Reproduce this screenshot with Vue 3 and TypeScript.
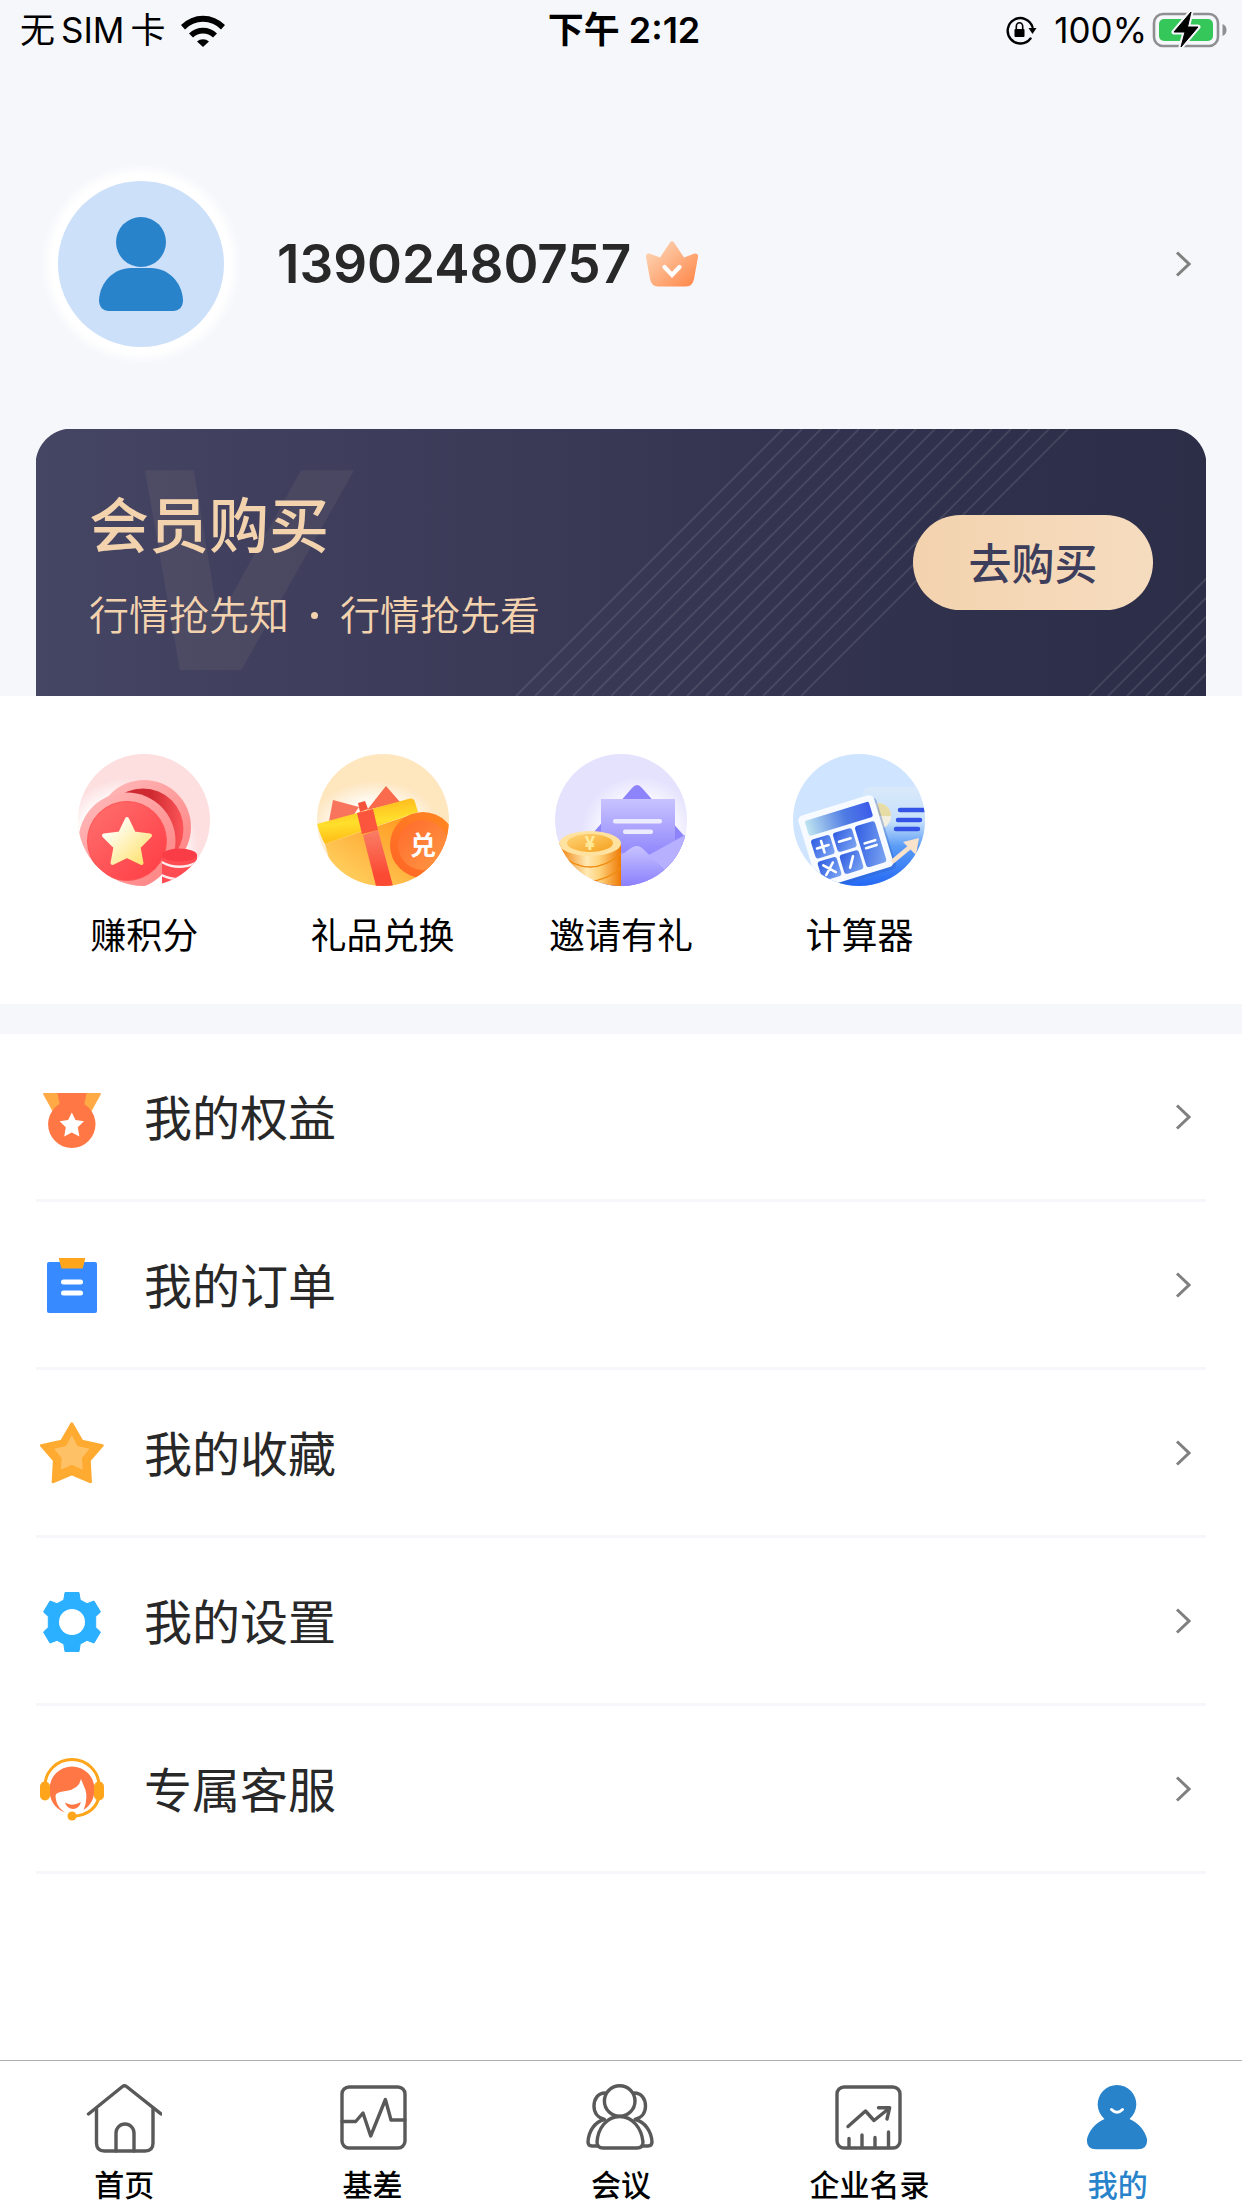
<script setup lang="ts">
interface Entry {
  id: string
  label: string
}

const account = '13902480757'

const features: Entry[] = [
  { id: 'points', label: '赚积分' },
  { id: 'gift', label: '礼品兑换' },
  { id: 'invite', label: '邀请有礼' },
  { id: 'calculator', label: '计算器' },
]

const menu: Entry[] = [
  { id: 'rights', label: '我的权益' },
  { id: 'orders', label: '我的订单' },
  { id: 'favorites', label: '我的收藏' },
  { id: 'settings', label: '我的设置' },
  { id: 'service', label: '专属客服' },
]

const tabs: Entry[] = [
  { id: 'home', label: '首页' },
  { id: 'basis', label: '基差' },
  { id: 'meeting', label: '会议' },
  { id: 'directory', label: '企业名录' },
  { id: 'mine', label: '我的' },
]

const activeTab = 'mine'

// Diagonal pinstripes on the member card, as bottom x positions
const stripes: number[] = [
  ...Array.from({ length: 16 }, (_, i) => 480 + i * 19),
  ...Array.from({ length: 6 }, (_, i) => 1053 + i * 19),
]
</script>

<template>
  <div class="page">
    <header class="status">
      <div class="status-left">
        <span class="carrier"><span>无</span><span>SIM</span><span>卡</span></span>
        <svg class="wifi" width="46" height="34" viewBox="0 0 46 34" aria-hidden="true">
          <path d="M1 12 A31 31 0 0 1 45 12 L41 16.500 A25 25 0 0 0 5 16.500 Z" />
          <path d="M9 20.500 A20 20 0 0 1 37 20.500 L33 24.500 A14.500 14.500 0 0 0 13 24.500 Z" />
          <path d="M17 28.500 A9 9 0 0 1 29 28.500 L23 34 Z" />
        </svg>
      </div>
      <div class="status-time">下午 2:12</div>
      <div class="status-right">
        <svg width="32" height="30" viewBox="0 0 32 30" aria-hidden="true">
          <path d="M25.500 23.500 A12.700 12.700 0 1 1 27.500 12" fill="none" stroke="#000" stroke-width="2.400" stroke-linecap="round" />
          <path d="M23.500 13 H31.500 L27.500 19 Z" />
          <rect x="9.500" y="14" width="10" height="8" rx="1" />
          <path d="M11.300 14 V11.500 a3.200 3.700 0 0 1 6.400 0 V14" fill="none" stroke="#000" stroke-width="1.600" />
        </svg>
        <span class="percent">100%</span>
        <svg width="76" height="38" viewBox="0 0 76 38" aria-hidden="true">
          <rect x="2" y="3" width="64" height="32" rx="9" fill="none" stroke="#8f8f92" stroke-width="2.600" />
          <path d="M70.500 13 a6.500 6.500 0 0 1 0 12 Z" fill="#8f8f92" />
          <rect x="7" y="8" width="54" height="22" rx="5" fill="#35c759" />
          <path d="M39 1 L22 21 H33 L29 36 L46 16 H35.500 Z" stroke="#f6f7fb" stroke-width="5" stroke-linejoin="round" />
          <path d="M39 1 L22 21 H33 L29 36 L46 16 H35.500 Z" stroke="#000" stroke-width="1" stroke-linejoin="round" />
        </svg>
      </div>
    </header>

    <a class="profile" href="#profile">
      <span class="avatar">
        <svg width="166" height="166" viewBox="0 0 166 166" aria-hidden="true">
          <circle cx="83" cy="61" r="25" fill="#2883cb" />
          <path d="M41 119 C42 101 56 87 73 87 H93 C110 87 124 101 125 119 C125 126 121 130 115 130 H51 C45 130 41 126 41 119 Z" fill="#2883cb" />
        </svg>
      </span>
      <span class="account">{{ account }}</span>
      <svg class="crown" width="52" height="46" viewBox="0 0 52 46" aria-hidden="true">
        <defs>
          <linearGradient id="crownFill" x1="0" y1="0" x2="1" y2="1">
            <stop offset=".15" stop-color="#fdd0ae" />
            <stop offset="1" stop-color="#ff8344" />
          </linearGradient>
        </defs>
        <path d="M24 1.500 Q26 -1 28 1.500 L38 16.500 L48.500 12.500 Q52.500 12 52 16 L48 38 Q46.500 45.500 40 45.500 H12 Q5.500 45.500 4 38 L0 16 Q-.5 12 3.500 12.500 L14 16.500 Z" fill="url(#crownFill)" />
        <path d="M18.500 26 L26 34 L33.500 26" fill="none" stroke="#fff" stroke-width="4.200" stroke-linecap="round" />
      </svg>
      <svg class="chevron" width="16" height="26" viewBox="0 0 16 26" aria-hidden="true">
        <path d="M2 1.500 L14 13 L2 24.500" />
      </svg>
    </a>

    <section class="member">
      <svg class="stripes" viewBox="0 0 1170 267" preserveAspectRatio="xMaxYMax slice" aria-hidden="true">
        <line v-for="x in stripes" :key="x" :x1="x" y1="267" :x2="x + 267" y2="0" />
      </svg>
      <span class="watermark" aria-hidden="true">V</span>
      <div class="member-text">
        <h1>会员购买</h1>
        <p><span>行情抢先知</span><i class="dot"></i><span>行情抢先看</span></p>
      </div>
      <button class="buy" type="button">去购买</button>
    </section>

    <nav class="features">
      <a v-for="item in features" :key="item.id" class="feature" :href="'#' + item.id">
        <svg v-if="item.id === 'points'" class="feature-icon" viewBox="0 0 132 132" aria-hidden="true">
          <defs>
            <linearGradient id="rim" x1="0" y1="0" x2="1" y2="1">
              <stop offset="0" stop-color="#ffbcbc" />
              <stop offset="1" stop-color="#ff7f7f" />
            </linearGradient>
            <linearGradient id="red" x1="0" y1="0" x2="1" y2="1">
              <stop offset="0" stop-color="#ff716e" />
              <stop offset="1" stop-color="#ff3a44" />
            </linearGradient>
            <linearGradient id="redDark" x1="0" y1="0" x2="1" y2="0">
              <stop offset=".6" stop-color="#cf2a31" />
              <stop offset="1" stop-color="#fd5558" />
            </linearGradient>
            <linearGradient id="cream" x1="0" y1="0" x2="1" y2="1">
              <stop offset=".2" stop-color="#fffdf0" />
              <stop offset="1" stop-color="#ffe066" />
            </linearGradient>
            <radialGradient id="pinkGlow" cx=".45" cy=".6" r=".5">
              <stop offset=".7" stop-color="#fff" />
              <stop offset="1" stop-color="#fff" stop-opacity="0" />
            </radialGradient>
          </defs>
          <rect width="132" height="132" fill="#fddfe0" />
          <circle cx="56" cy="82" r="72" fill="url(#pinkGlow)" />
          <circle cx="66" cy="73" r="47" fill="url(#rim)" />
          <circle cx="65" cy="75" r="40.500" fill="url(#redDark)" />
          <circle cx="49" cy="87" r="48.500" fill="url(#rim)" />
          <circle cx="49" cy="87" r="39.500" fill="url(#red)" stroke="#f55" stroke-width="1" />
          <path d="M49 65 L56 79.500 L72 81.500 L60.500 93 L63.500 109 L49 102 L34.500 109 L37.500 93 L26 81.500 L42 79.500 Z" fill="url(#cream)" stroke="url(#cream)" stroke-width="4" stroke-linejoin="round" />
          <path d="M84 101 H119 V132 H84 Z" fill="#ff4b52" />
          <path d="M84 107 Q101 116 119 107 V109.500 Q101 118.500 84 109.500 Z M84 120 Q101 128 119 120 V122.500 Q101 130.500 84 122.500 Z" fill="#fff" opacity=".9" />
          <ellipse cx="101.500" cy="101" rx="17.500" ry="6.500" fill="#f93c45" />
        </svg>

        <svg v-else-if="item.id === 'gift'" class="feature-icon" viewBox="0 0 132 132" aria-hidden="true">
          <defs>
            <linearGradient id="box" x1="0" y1="1" x2="1" y2="0">
              <stop offset=".2" stop-color="#ffcb5a" />
              <stop offset="1" stop-color="#ff8f14" />
            </linearGradient>
            <linearGradient id="lid" x1=".4" y1="0" x2=".6" y2="1">
              <stop offset="0" stop-color="#ffb41c" />
              <stop offset=".5" stop-color="#ffdf2c" />
              <stop offset="1" stop-color="#ffb310" />
            </linearGradient>
            <linearGradient id="ribbon" x1="0" y1="0" x2="0" y2="1">
              <stop offset="0" stop-color="#fa7e66" />
              <stop offset=".8" stop-color="#fb4a34" />
            </linearGradient>
            <linearGradient id="badge" x1="1" y1="0" x2="0" y2="1">
              <stop offset="0" stop-color="#ff8a20" />
              <stop offset="1" stop-color="#ff6327" />
            </linearGradient>
            <linearGradient id="badgeIn" x1="0" y1="0" x2="1" y2="1">
              <stop offset="0" stop-color="#ff692c" />
              <stop offset="1" stop-color="#ff9b45" />
            </linearGradient>
            <radialGradient id="giftGlow" cx=".5" cy=".5" r=".5">
              <stop offset=".6" stop-color="#fff" />
              <stop offset="1" stop-color="#fff" stop-opacity="0" />
            </radialGradient>
          </defs>
          <rect width="132" height="132" fill="#fee6bf" />
          <ellipse cx="58" cy="75" rx="66" ry="48" fill="url(#giftGlow)" opacity=".8" />
          <path d="M16 46 L42 53 L36 62 L12 67 Z" fill="#f9745c" />
          <path d="M69 32 L83 48 L50 56 Z" fill="#fa6a4c" />
          <path d="M8 90 L96 60 L108 132 H20 Z" fill="url(#box)" />
          <path d="M0 70 L93 44.500 Q97 44 98 48 L101 58 L8 90 Q4 84 0 70 Z" fill="url(#lid)" />
          <path d="M41 49 L48 47 L51 55 L43 58 Z" fill="#f4543c" />
          <path d="M40 59 L56 55 L61 76 L45 80 Z" fill="#fb553d" />
          <path d="M46 81 L61 76 L76 132 H59 Z" fill="url(#ribbon)" />
          <circle cx="106" cy="91" r="33" fill="url(#badge)" />
          <circle cx="106" cy="91" r="25" fill="url(#badgeIn)" />
          <text x="106" y="101" text-anchor="middle" font-size="26" font-weight="700" fill="#fff">兑</text>
        </svg>

        <svg v-else-if="item.id === 'invite'" class="feature-icon" viewBox="0 0 132 132" aria-hidden="true">
          <defs>
            <linearGradient id="paper" x1="0" y1="0" x2="0" y2="1">
              <stop offset="0" stop-color="#c8c3ff" />
              <stop offset="1" stop-color="#8b80fc" />
            </linearGradient>
            <linearGradient id="gold" x1="0" y1="0" x2="1" y2="0">
              <stop offset="0" stop-color="#f07f08" />
              <stop offset=".45" stop-color="#ffe9b4" />
              <stop offset=".65" stop-color="#ffd37c" />
              <stop offset="1" stop-color="#ee7a06" />
            </linearGradient>
            <linearGradient id="goldTop" x1="0" y1="0" x2="1" y2="1">
              <stop offset="0" stop-color="#ffd57a" />
              <stop offset="1" stop-color="#f5a01c" />
            </linearGradient>
            <radialGradient id="mailGlow" cx=".5" cy=".5" r=".5">
              <stop offset=".6" stop-color="#fff" />
              <stop offset="1" stop-color="#fff" stop-opacity="0" />
            </radialGradient>
          </defs>
          <rect width="132" height="132" fill="#e5e2fe" />
          <circle cx="84" cy="80" r="58" fill="url(#mailGlow)" opacity=".8" />
          <path d="M38 79 L77 34 Q82 28 87 34 L131 84 V132 H38 Z" fill="#8d83fb" />
          <rect x="46" y="45" width="74" height="62" fill="url(#paper)" />
          <rect x="58" y="65" width="49" height="4.500" rx="2" fill="#edebff" />
          <rect x="68" y="75.500" width="30" height="4.500" rx="2" fill="#edebff" />
          <path d="M132 80 L94 101 L60 98 V132 H132 Z" fill="#aaa2ff" />
          <path d="M132 80 L94 101 L118 124 Z" fill="#b6b0ff" />
          <path d="M50 113 L76 94 Q82 90 87 94 L125 130 V132 H50 Z" fill="url(#paper)" />
          <path d="M4 89 H66 V132 H4 Z" fill="url(#gold)" />
          <path d="M4 100 Q35 126 66 100 M4 114 Q35 140 66 114" fill="none" stroke="#f08c10" stroke-width="1.500" />
          <ellipse cx="35" cy="89.500" rx="31" ry="12.500" fill="#ffe2a0" />
          <ellipse cx="35" cy="89" rx="23" ry="9" fill="url(#goldTop)" />
          <text x="35" y="96" text-anchor="middle" font-size="19" font-weight="700" fill="#ffea9a">¥</text>
        </svg>

        <svg v-else class="feature-icon" viewBox="0 0 132 132" aria-hidden="true">
          <defs>
            <linearGradient id="sheet" x1=".3" y1="0" x2=".3" y2="1">
              <stop offset="0" stop-color="#d9e9fa" />
              <stop offset=".35" stop-color="#c6e0fb" />
              <stop offset=".6" stop-color="#5a9cf6" />
              <stop offset="1" stop-color="#2468f4" />
            </linearGradient>
            <linearGradient id="screen" x1="0" y1="0" x2="1" y2="0">
              <stop offset="0" stop-color="#bfe4f0" />
              <stop offset=".6" stop-color="#4f7be4" />
              <stop offset="1" stop-color="#3c5cea" />
            </linearGradient>
            <linearGradient id="key" x1="0" y1="0" x2="1" y2="1">
              <stop offset="0" stop-color="#2f5be2" />
              <stop offset="1" stop-color="#7da7f2" />
            </linearGradient>
          </defs>
          <rect width="132" height="132" fill="#cfe4ff" />
          <path d="M70 38 Q72 33 78 33 H132 V132 H45 Z" fill="url(#sheet)" />
          <circle cx="85" cy="62" r="13" fill="#f2efe0" />
          <path d="M85 49 A13 13 0 0 1 98 62 H85 Z" fill="#e8dca6" />
          <g stroke="#3454e8" stroke-width="4.500" stroke-linecap="round">
            <path d="M107 56 H132 M105 66 H127 M103 75 H125" />
          </g>
          <g transform="translate(4 63) rotate(-17)">
            <rect x="2" y="3" width="79" height="75" rx="5" fill="#2a5ec4" opacity=".35" />
            <rect width="79" height="75" rx="5" fill="#f7faff" />
            <rect x="6" y="6" width="67" height="16" rx="2" fill="url(#screen)" />
            <rect x="6" y="26" width="20" height="20" rx="3" fill="url(#key)" />
            <rect x="29" y="26" width="20" height="20" rx="3" fill="url(#key)" />
            <rect x="6" y="49" width="20" height="20" rx="3" fill="url(#key)" />
            <rect x="29" y="49" width="20" height="20" rx="3" fill="url(#key)" />
            <rect x="52" y="26" width="21" height="43" rx="3" fill="url(#key)" />
            <path d="M10 36 H22 M16 30 V42 M33 36 H45 M11 54 L21 64 M21 54 L11 64 M42 54 L36 64 M57 45 H68 M57 50 H68" stroke="#fff" stroke-width="2.600" stroke-linecap="round" />
          </g>
          <path d="M99 108 L117 93" stroke="#fbe2cb" stroke-width="4.500" />
          <path d="M110 88 L126 84 L123 101 Z" fill="#fbe2cb" />
        </svg>
        <span>{{ item.label }}</span>
      </a>
    </nav>

    <ul class="menu">
      <li v-for="item in menu" :key="item.id">
        <a class="menu-row" :href="'#' + item.id">
          <svg width="64" height="64" viewBox="0 -1 64 64" aria-hidden="true">
            <g v-if="item.id === 'rights'">
              <path d="M3 8 Q3 7 4 7 H60 Q61 7 61 8 L51 26 H13 Z" fill="#ffaa44" />
              <path d="M17.500 7 H46.500 L44 20 H20 Z" fill="#ff7744" />
              <circle cx="31.800" cy="38.300" r="23.700" fill="#ff7744" />
              <path d="M31.800 26.500 L35.500 34 L44 35.300 L37.800 41.300 L39.400 50.500 L31.800 46.500 L24.200 50.500 L25.800 41.300 L19.600 35.300 L28.100 34 Z" fill="#fff" />
            </g>
            <g v-else-if="item.id === 'orders'">
              <rect x="7" y="8" width="50" height="51" rx="2" fill="#378aff" />
              <path d="M18.700 4 H45.300 L42.700 14.400 H21.500 Z" fill="#ffa51c" />
              <rect x="21" y="25.500" width="22" height="5" rx="2.500" fill="#fff" />
              <rect x="21" y="36.500" width="22" height="5" rx="2.500" fill="#fff" />
            </g>
            <g v-else-if="item.id === 'favorites'">
              <path d="M31.800 1.500 L42 19 L62.500 23.500 L49.500 38.500 L50.700 60 L31.800 52 L12.900 60 L14.100 38.500 L1.100 23.500 L21.600 19 Z" fill="#ffaa30" stroke="#ffaa30" stroke-width="2.500" stroke-linejoin="round" />
              <path d="M31.800 13 L37.500 24 L49.500 26.800 L42 36 L42.700 47.700 L31.800 42.700 L20.900 47.700 L21.600 36 L14.100 26.800 L26.100 24 Z" fill="#ffc166" />
            </g>
            <g v-else-if="item.id === 'settings'">
              <path d="M25 2.500 H39 L40.200 10 L47 13.700 L54 11 L60.500 22 L55.700 26.500 V37.500 L60.500 42 L54 53 L47 50.300 L40.200 54 L39 61.500 H25 L23.800 54 L17 50.300 L10 53 L3.500 42 L8.300 37.500 V26.500 L3.500 22 L10 11 L17 13.700 L23.800 10 Z" fill="#2bafff" stroke="#2bafff" stroke-linejoin="round" />
              <circle cx="32" cy="32" r="13" fill="#fff" />
            </g>
            <g v-else>
              <path d="M5 28 A27 26.500 0 0 1 59 28" fill="none" stroke="#ffa51c" stroke-width="3" />
              <path d="M59 38 Q56 56 33 58.500" fill="none" stroke="#ffa51c" stroke-width="3" />
              <circle cx="32" cy="58" r="4.500" fill="#ffa51c" />
              <path d="M25 54.500 C14 50 9.500 42 9.500 31 A22.500 22.500 0 0 1 54.500 31 C54.500 41 50 48 43.500 52 Q48 42 45.500 32 L41 21 Q39 31 26 33 Q15 34 15.500 38 C16 46 19 50 25 54.500 Z" fill="#ff7744" />
              <path d="M25 44.500 Q32 49 41 44 Q39 51 33 51 Q27 51 25 44.500 Z" fill="#ff7744" />
              <rect x="0" y="23.500" width="10" height="19" rx="5" fill="#ffa51c" />
              <rect x="54" y="23.500" width="10" height="19" rx="5" fill="#ffa51c" />
            </g>
          </svg>
          <span class="menu-label">{{ item.label }}</span>
          <svg class="chevron" width="16" height="26" viewBox="0 0 16 26" aria-hidden="true">
            <path d="M2 1.500 L14 13 L2 24.500" />
          </svg>
        </a>
      </li>
    </ul>

    <nav class="tabbar">
      <a v-for="tab in tabs" :key="tab.id" class="tab" :class="{ active: tab.id === activeTab }" :href="'#' + tab.id">
        <svg width="76" height="72" viewBox="0 0 76 72" fill="none" stroke="#595959" stroke-width="3.400" stroke-linecap="round" stroke-linejoin="round" aria-hidden="true">
          <g v-if="tab.id === 'home'">
            <path d="M2.500 32 L36.500 4.500 Q38.500 3 40.500 4.500 L75 32" />
            <path d="M10.500 27 V61 Q10.500 69 18.500 69 H59 Q67 69 67 61 V27" />
            <path d="M30 69 V51 A9 9 0 0 1 48 51 V69" />
          </g>
          <g v-else-if="tab.id === 'basis'">
            <rect x="7" y="5" width="63" height="61" rx="7" />
            <path d="M7 39.500 H20.700 L28 31 L35.700 54 L50.400 17.500 L56 38 H70" />
          </g>
          <g v-else-if="tab.id === 'meeting'">
            <circle cx="36.700" cy="19" r="15.300" />
            <path d="M14 60 C15 46 24 34.500 36.700 34.500 C49.500 34.500 58.500 46 60 60 Q60 66 54 66 H20 Q14 66 14 60 Z" />
            <path d="M22 11 C15 11 11 17 11 24 C11 31 15 36 21.500 37.500 C11 40 5.500 50 5 60 Q5 64 9 64 H15" />
            <path d="M51.500 11 C58.500 11 62.500 17 62.500 24 C62.500 31 58.500 36 52 37.500 C62.500 40 68.500 50 69 60 Q69 64 65 64 H59" />
          </g>
          <g v-else-if="tab.id === 'directory'">
            <rect x="6" y="5" width="63" height="61" rx="7" />
            <path d="M17 44.500 L34.500 29 L43 38.500 L58.500 26 M47.500 25.700 H58.700 L56 37" />
            <path d="M18 56.500 V65 M31 53 V65 M44 55.500 V65 M57.500 50 V65" />
          </g>
          <g v-else>
            <path d="M24.500 37 A19.300 19.300 0 1 1 49.500 37 C59 41 65 49 67 57 Q68 67.300 58 67.300 H16 Q6 67.300 7 57 C9 49 15 41 24.500 37 Z" fill="#2883cb" stroke="none" />
            <path d="M31.500 27.500 Q37 33 42.500 27.500" stroke="#fff" stroke-width="3" />
          </g>
        </svg>
        <span>{{ tab.label }}</span>
      </a>
    </nav>
  </div>
</template>

<style>
body {
  background: #fff;
}
</style>

<style scoped>
.page {
  display: flex;
  flex-direction: column;
  min-height: 100vh;
  background: #fff;
  color: #000;
  font-family: Inter, "Noto Sans CJK SC", sans-serif;
}

a {
  color: inherit;
  text-decoration: none;
}

svg {
  display: block;
  flex: none;
}

.status {
  display: grid;
  grid-template-columns: 1fr auto 1fr;
  align-items: center;
  height: 60px;
  padding: 0 14px 0 20px;
  background: #f6f7fb;
  font-size: 35px;
}

.status-left,
.status-right {
  display: flex;
  align-items: center;
}

.status-left {
  gap: 14px;
}

.carrier {
  display: flex;
  align-items: baseline;
  gap: 6px;
  line-height: 60px;
}

.status-time {
  font-size: 36px;
  font-weight: 600;
  line-height: 58px;
}

.status-right {
  justify-content: flex-end;
}

.percent {
  margin: 0 5px 0 17px;
}

.profile {
  display: flex;
  align-items: center;
  padding: 121px 51px 82px 58px;
  background: #f6f7fb;
}

.avatar {
  border-radius: 50%;
  background: #cce0f9;
  box-shadow: 0 0 10px 12px #fff;
}

.account {
  margin-left: 53px;
  color: #282828;
  font-size: 53px;
  font-weight: 600;
  line-height: 64px;
}

.crown {
  margin-left: 15px;
}

.chevron {
  margin-left: auto;
  fill: none;
  stroke: #808080;
  stroke-width: 3;
}

.member {
  position: relative;
  display: flex;
  align-items: center;
  justify-content: space-between;
  min-height: 267px;
  padding: 0 53px;
  border: 0 solid #f6f7fb;
  border-width: 0 36px;
  background: linear-gradient(90deg, #454564, #383754 50%, #30314c 75%, #2c2e48) padding-box, #f6f7fb;
}

.member::before,
.member::after {
  content: "";
  position: absolute;
  top: 0;
  width: 36px;
  height: 36px;
}

.member::before {
  left: 0;
  background: radial-gradient(circle at 100% 100%, transparent 36px, #f6f7fb 37px);
}

.member::after {
  right: 0;
  background: radial-gradient(circle at 0 100%, transparent 36px, #f6f7fb 37px);
}

.stripes {
  position: absolute;
  inset: 0;
  width: 100%;
  height: 100%;
  stroke: #fff;
  stroke-opacity: .1;
  stroke-width: 2;
}

.watermark {
  position: absolute;
  top: 47px;
  left: 88px;
  color: #f3d3ac;
  opacity: .06;
  font-family: "DejaVu Sans", sans-serif;
  font-size: 274px;
  font-style: italic;
  font-weight: 700;
  line-height: 200px;
}

.member-text {
  position: relative;
  padding-top: 6px;
  color: #f3d3ae;
}

.member-text h1 {
  margin: 0 0 20px;
  font-size: 60px;
  font-weight: 500;
  line-height: 80px;
}

.member-text p {
  display: flex;
  align-items: center;
  margin: 0;
  font-size: 40px;
  font-weight: 350;
  line-height: 60px;
}

.dot {
  width: 7px;
  height: 7px;
  margin: 0 22px;
  border-radius: 50%;
  background: currentColor;
}

.buy {
  position: relative;
  width: 240px;
  height: 95px;
  padding: 0 0 4px;
  border: 0;
  border-radius: 48px;
  background: linear-gradient(90deg, #f3d3ae, #f6dcbf);
  color: #3d3d5c;
  font: inherit;
  font-size: 43px;
  font-weight: 500;
}

.features {
  display: grid;
  grid-template-columns: repeat(5, 1fr);
  padding: 58px 25px 42px;
}

.feature {
  display: flex;
  flex-direction: column;
  align-items: center;
  gap: 24px;
  font-size: 36px;
  line-height: 52px;
}

.feature-icon {
  width: 132px;
  height: 132px;
  border-radius: 50%;
}

.menu {
  margin: 0;
  padding: 0 36px;
  border-top: 30px solid #f6f7fb;
  list-style: none;
}

.menu-row {
  display: flex;
  align-items: center;
  height: 168px;
  padding: 0 15px 0 4px;
  border-bottom: 3px solid #f6f7fb;
  box-sizing: border-box;
}

.menu-label {
  margin-left: 40px;
  padding-bottom: 4px;
  color: #282828;
  font-size: 48px;
}

.tabbar {
  display: grid;
  grid-template-columns: repeat(5, 1fr);
  margin-top: auto;
  padding: 21px 0 1px;
  border-top: 1px solid #b0b0b0;
}

.tab {
  display: flex;
  flex-direction: column;
  align-items: center;
  gap: 9px;
  font-size: 30px;
  font-weight: 500;
  line-height: 44px;
}

.active {
  color: #2883cb;
}
</style>
